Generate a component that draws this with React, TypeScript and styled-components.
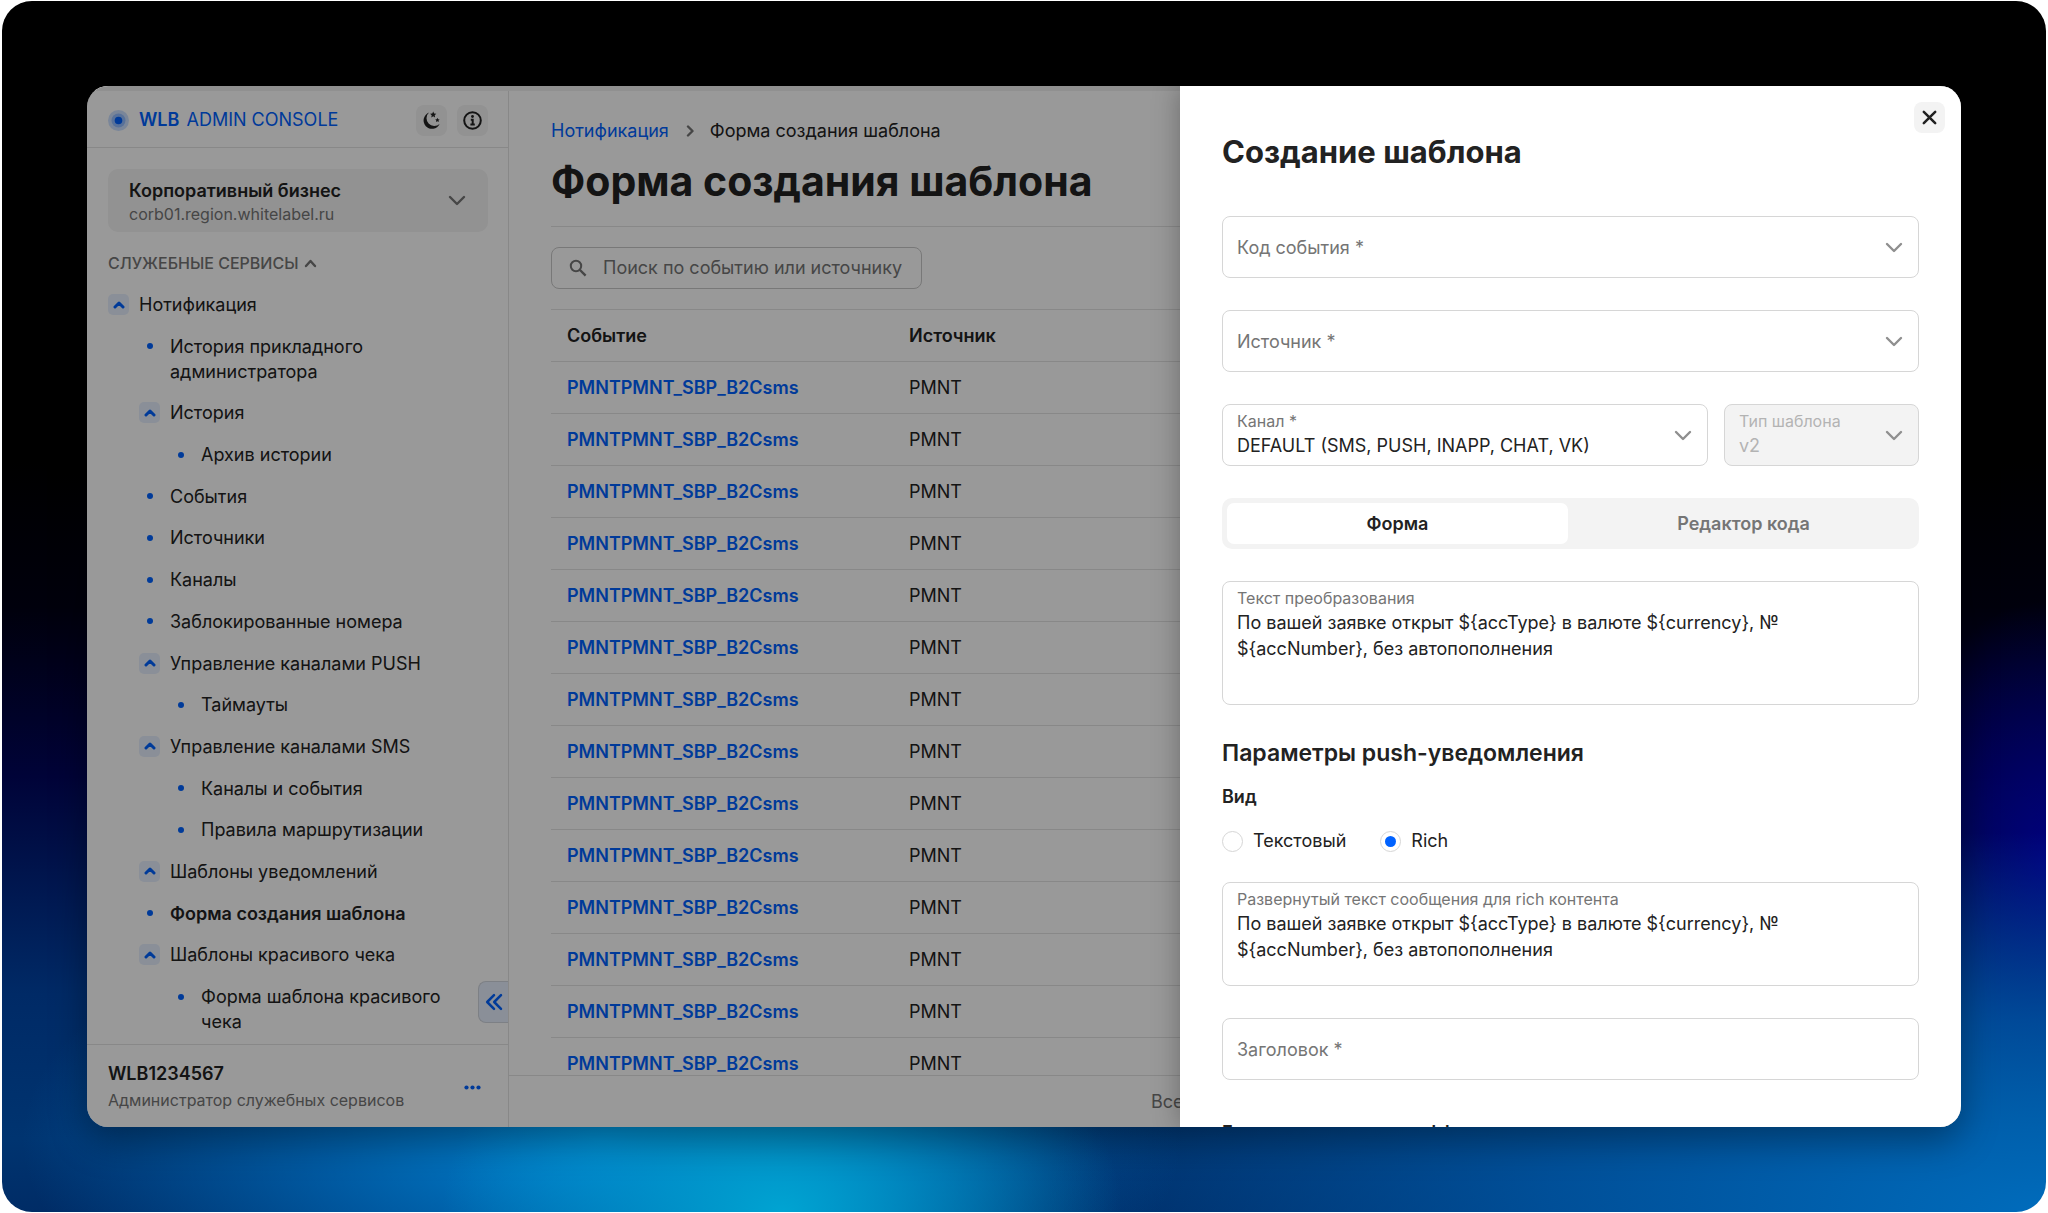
import React from "react";
import styled, { createGlobalStyle, css } from "styled-components";

const color = {
  text: "#222222",
  muted: "#757575",
  faint: "#b3b3b3",
  line: "#e3e3e3",
  border: "#d6d6d6",
  soft: "#f3f3f3",
  blue: "#0062ff",
  blueSoft: "#e6effd",
};

const GlobalStyle = createGlobalStyle`
  *, *::before, *::after { box-sizing: border-box; }
  body {
    margin: 0;
    background: #ffffff;
    color: ${color.text};
    font: 400 18px/26px Inter, "Liberation Sans", sans-serif;
  }
  button, input, select, textarea { font: inherit; color: inherit; margin: 0; }
  button { border: 0; padding: 0; background: none; cursor: pointer; }
  h1, h2, h3, p, ul { margin: 0; padding: 0; }
  a { color: ${color.blue}; text-decoration: none; }
`;

const Page = styled.div`
  height: 100vh;
  padding: 1px 2px;
`;

const Backdrop = styled.div`
  height: 100%;
  padding: 85px;
  border-radius: 30px;
  background:
    radial-gradient(ellipse 340px 230px at 780px 100%, #00a4d2 0%, rgba(0, 156, 206, 0.6) 45%, transparent 100%),
    radial-gradient(ellipse 580px 260px at 600px 94%, #0084d2 0%, rgba(0, 116, 196, 0.6) 50%, transparent 100%),
    radial-gradient(ellipse 1000px 380px at 100% 100%, #006cbc 0%, rgba(0, 90, 168, 0.75) 50%, transparent 100%),
    radial-gradient(ellipse 160px 260px at 100% 71%, #00007c 0%, rgba(0, 0, 110, 0.6) 50%, transparent 100%),
    linear-gradient(180deg, #000000 38%, #00000c 50%, #000338 64%, #002a66 82%, #003470 94%, #002c66 100%);
`;

const Window = styled.div`
  position: relative;
  display: flex;
  flex-direction: column;
  height: 100%;
  overflow: hidden;
  border-radius: 21px;
  background: #ffffff;
`;

const WindowShadow = styled.div`
  height: 100%;
  border-radius: 21px;
  box-shadow: 0 14px 36px rgba(0, 0, 0, 0.35);
`;

const TopStrip = styled.div`
  flex: none;
  height: 5px;
  background: #f0f0f0;
`;

const Columns = styled.div`
  display: flex;
  flex: 1;
  min-height: 0;
`;

/* Sidebar */

const Sidebar = styled.aside`
  position: relative;
  display: flex;
  flex: none;
  flex-direction: column;
  width: 422px;
  border-right: 1px solid ${color.line};
`;

const SideHead = styled.header`
  display: flex;
  align-items: center;
  gap: 10px;
  height: 57px;
  padding: 2px 20px 0 21px;
  border-bottom: 1px solid ${color.line};
`;

const Brand = styled.a`
  display: flex;
  flex: 1;
  align-items: center;
  gap: 10px;
`;

const BrandName = styled.span`
  b { margin-right: 2px; font-weight: 600; }
`;

const IconButton = styled.button`
  display: grid;
  flex: none;
  place-items: center;
  width: 31px;
  height: 31px;
  border-radius: 8px;
  background: ${color.soft};
`;

const SideBody = styled.div`
  display: flex;
  flex: 1;
  flex-direction: column;
  min-height: 0;
  padding: 21px 20px 10px 21px;
`;

const OrgButton = styled.button`
  display: flex;
  align-items: center;
  justify-content: space-between;
  height: 63px;
  padding: 0 22px 0 21px;
  border-radius: 10px;
  background: ${color.soft};
  text-align: left;
`;

const Stack = styled.span`
  display: flex;
  flex-direction: column;
`;

const Strong = styled.span`
  font-weight: 600;
  line-height: 26px;
`;

const Small = styled.span`
  color: ${color.muted};
  font-size: 16px;
  line-height: 20px;
`;

const GroupTitle = styled.button`
  display: flex;
  align-items: center;
  gap: 5px;
  margin: 20px 0 18px;
  color: ${color.muted};
  font-size: 16px;
  font-weight: 500;
  line-height: 22px;
`;

const Tree = styled.ul`
  display: flex;
  flex: 1;
  flex-direction: column;
  justify-content: space-between;
  list-style: none;
`;

const TreeRow = styled.li<{ $level: number }>`
  display: flex;
  gap: 10px;
  padding-left: ${(p) => p.$level * 31}px;
  line-height: 25px;
`;

const Marker = styled.span`
  display: grid;
  flex: none;
  place-items: center;
  width: 21px;
  height: 25px;
`;

const Toggle = styled.button`
  display: grid;
  place-items: center;
  width: 21px;
  height: 21px;
  border-radius: 5px;
  background: ${color.blueSoft};
`;

const Dot = styled.i`
  width: 6px;
  height: 6px;
  border-radius: 50%;
  background: ${color.blue};
`;

const TreeLink = styled.a<{ $active?: boolean }>`
  max-width: 260px;
  color: ${color.text};
  font-weight: ${(p) => (p.$active ? 600 : 400)};
`;

const CollapseButton = styled.button`
  position: absolute;
  right: 0;
  bottom: 104px;
  display: grid;
  place-items: center;
  width: 30px;
  height: 42px;
  border: 1px solid #d0d5de;
  border-right: 0;
  border-radius: 8px 0 0 8px;
  background: ${color.blueSoft};
`;

const UserBar = styled.footer`
  display: flex;
  align-items: center;
  justify-content: space-between;
  height: 83px;
  padding: 2px 27px 0 21px;
  border-top: 1px solid ${color.line};
`;

const MoreButton = styled.button`
  display: grid;
  place-items: center;
`;

const UserRole = styled(Small)`
  line-height: 26px;
`;

/* Main column */

const Main = styled.main`
  display: flex;
  flex: 1;
  flex-direction: column;
  min-width: 0;
`;

const Content = styled.div`
  display: flex;
  flex: 1;
  flex-direction: column;
  min-height: 0;
  padding: 27px 42px 0;
  overflow: hidden;
`;

const Crumbs = styled.nav`
  display: flex;
  align-items: center;
  gap: 15px;
`;

const PageTitle = styled.h1`
  padding: 12px 0 20px;
  border-bottom: 1px solid ${color.line};
  font-size: 41px;
  font-weight: 700;
  line-height: 50px;
`;

const SearchBox = styled.label`
  display: flex;
  flex: none;
  align-items: center;
  gap: 16px;
  width: 371px;
  height: 42px;
  margin: 20px 0;
  padding: 0 5px 0 17px;
  border: 1px solid #c8c8c8;
  border-radius: 8px;
`;

const SearchInput = styled.input`
  flex: 1;
  min-width: 0;
  padding: 0;
  border: 0;
  outline: 0;
  background: transparent;
  &::placeholder { color: ${color.muted}; opacity: 1; }
`;

const Table = styled.table`
  width: 100%;
  border-collapse: collapse;
  table-layout: fixed;
  border-top: 1px solid ${color.line};
`;

const Cell = css`
  height: 52px;
  padding: 1px 16px 0;
  border-bottom: 1px solid ${color.line};
  text-align: left;
`;

const Th = styled.th<{ $width?: string }>`
  ${Cell}
  width: ${(p) => p.$width ?? "auto"};
  font-weight: 600;
`;

const Td = styled.td`
  ${Cell}
`;

const EventLink = styled.a`
  font-weight: 600;
`;

const MainFooter = styled.footer`
  display: flex;
  flex: none;
  align-items: center;
  justify-content: center;
  height: 52px;
  border-top: 1px solid ${color.line};
  color: ${color.muted};
`;

/* Drawer */

const Overlay = styled.div`
  position: absolute;
  inset: 0;
  display: flex;
  justify-content: flex-end;
  background: rgba(0, 0, 0, 0.4);
`;

const Drawer = styled.section`
  position: relative;
  width: 781px;
  max-width: 100%;
  padding: 46px 42px 0;
  overflow: hidden;
  background: #ffffff;
  box-shadow: 0 0 26px rgba(0, 0, 0, 0.3);
`;

const DrawerTitle = styled.h2`
  margin-bottom: 44px;
  font-size: 31px;
  font-weight: 700;
  line-height: 40px;
`;

const CloseButton = styled(IconButton)`
  position: absolute;
  top: 16px;
  right: 16px;
`;

const Form = styled.form`
  display: flex;
  flex-direction: column;
  gap: 32px;
`;

const Row = styled.div`
  display: flex;
  gap: 16px;
`;

const FieldBox = styled.div<{ $height: number; $width?: number; $disabled?: boolean }>`
  display: grid;
  flex: ${(p) => (p.$width ? `0 0 ${p.$width}px` : "1 1 auto")};
  height: ${(p) => p.$height}px;
  border: 1px solid ${color.border};
  border-radius: 8px;
  background: ${(p) => (p.$disabled ? color.soft : "#ffffff")};
  color: ${(p) => (p.$disabled ? color.faint : color.text)};
  > * { grid-area: 1 / 1; }
`;

const FieldLabel = styled.label<{ $floating: boolean; $disabled?: boolean }>`
  z-index: 1;
  align-self: ${(p) => (p.$floating ? "start" : "center")};
  padding: ${(p) => (p.$floating ? "6px 14px 0" : "1px 14px 0")};
  color: ${(p) => (p.$disabled ? color.faint : color.muted)};
  font-size: ${(p) => (p.$floating ? 16 : 18)}px;
  line-height: ${(p) => (p.$floating ? 20 : 26)}px;
  pointer-events: none;
`;

const control = css`
  width: 100%;
  height: 100%;
  border: 0;
  border-radius: 8px;
  outline: 0;
  background: transparent;
  appearance: none;
`;

const Select = styled.select`
  ${control}
  padding: 22px 48px 0 14px;
  &:disabled { color: ${color.faint}; opacity: 1; }
`;

const Input = styled.input`
  ${control}
  padding: 0 14px;
`;

const TextArea = styled.textarea`
  ${control}
  padding: 28px 14px 0;
  resize: none;
  overflow: hidden;
`;

const SelectArrow = styled.span`
  place-self: center end;
  padding-right: 15px;
  line-height: 0;
  pointer-events: none;
`;

const Segments = styled.div`
  display: flex;
  gap: 5px;
  height: 51px;
  padding: 5px;
  border-radius: 10px;
  background: ${color.soft};
`;

const Segment = styled.button<{ $active?: boolean }>`
  flex: 1;
  border-radius: 7px;
  background: ${(p) => (p.$active ? "#ffffff" : "transparent")};
  color: ${(p) => (p.$active ? color.text : color.muted)};
  font-weight: 600;
`;

const SectionTitle = styled.h3`
  font-size: 23px;
  font-weight: 600;
  line-height: 32px;
`;

const SubTitle = styled.h3`
  padding-top: 8px;
  font-size: 18px;
  font-weight: 600;
  line-height: 26px;
`;

const RadioGroup = styled.fieldset`
  display: flex;
  gap: 34px;
  min-width: 0;
  margin: -17px 0 -4px;
  padding: 0;
  border: 0;
`;

const Legend = styled.legend`
  margin-bottom: 18px;
  padding: 0;
  font-weight: 600;
`;

const RadioLabel = styled.label`
  display: flex;
  align-items: center;
  gap: 10px;
`;

const Radio = styled.input`
  width: 21px;
  height: 21px;
  border: 1px solid ${color.border};
  border-radius: 50%;
  appearance: none;
  display: grid;
  place-items: center;
  &:checked::before {
    content: "";
    width: 11px;
    height: 11px;
    border-radius: 50%;
    background: ${color.blue};
  }
`;

/* Icons */

type ChevronProps = { w: number; h: number; stroke: string; up?: boolean; weight?: number };

const Chevron = ({ w, h, stroke, up, weight = 2.4 }: ChevronProps) => (
  <svg width={w + 4} height={h + 4} viewBox={`-2 -2 ${w + 4} ${h + 4}`} fill="none" aria-hidden="true">
    <path
      d={up ? `M0 ${h} L${w / 2} 0 L${w} ${h}` : `M0 0 L${w / 2} ${h} L${w} 0`}
      stroke={stroke}
      strokeWidth={weight}
      strokeLinecap="round"
      strokeLinejoin="round"
    />
  </svg>
);

const Logo = () => (
  <svg width="21" height="21" viewBox="0 0 21 21" aria-hidden="true">
    <circle cx="10.5" cy="10.5" r="10.5" fill={color.blue} opacity="0.2" />
    <circle cx="10.5" cy="10.5" r="7" fill={color.blue} opacity="0.28" />
    <circle cx="10.5" cy="10.5" r="3.8" fill={color.blue} />
  </svg>
);

const MoonIcon = () => (
  <svg width="21" height="21" viewBox="0 0 21 21" fill={color.text} aria-hidden="true">
    <path d="M8 2.6A8.4 8.4 0 1 0 18.6 14 6.9 6.9 0 0 1 8 2.6Z" />
    <path d="M12.2 1.4l.9 2 2.2.3-1.6 1.5.4 2.2-1.9-1.1-1.9 1.1.4-2.2-1.6-1.5 2.2-.3Z" />
    <path d="M16.4 7.8l.7 1.4 1.5.2-1.1 1.1.3 1.5-1.4-.7-1.4.7.3-1.5-1.1-1.1 1.5-.2Z" />
  </svg>
);

const InfoIcon = () => (
  <svg width="21" height="21" viewBox="0 0 21 21" fill="none" aria-hidden="true">
    <circle cx="10.5" cy="10.5" r="8.3" stroke={color.text} strokeWidth="2" />
    <circle cx="10.5" cy="6.5" r="1.4" fill={color.text} />
    <path d="M8.8 9.8h1.9v4.6M8.4 14.6h4.4" stroke={color.text} strokeWidth="2" />
  </svg>
);

const SearchIcon = () => (
  <svg width="18" height="18" viewBox="0 0 18 18" fill="none" aria-hidden="true">
    <circle cx="7" cy="7" r="5.2" stroke={color.muted} strokeWidth="2" />
    <path d="M11 11l5.6 5.6" stroke={color.muted} strokeWidth="2.4" />
  </svg>
);

const CollapseIcon = () => (
  <svg width="18" height="18" viewBox="0 0 18 18" fill="none" stroke={color.blue} strokeWidth="2.5" strokeLinecap="round" strokeLinejoin="round" aria-hidden="true">
    <path d="M9 2.2L2.2 9 9 15.8M16 2.2L9.2 9l6.8 6.8" />
  </svg>
);

const MoreIcon = () => (
  <svg width="17" height="5" viewBox="0 0 17 5" fill={color.blue} aria-hidden="true">
    <circle cx="2.5" cy="2.5" r="2.1" />
    <circle cx="8.5" cy="2.5" r="2.1" />
    <circle cx="14.5" cy="2.5" r="2.1" />
  </svg>
);

const CloseIcon = () => (
  <svg width="15" height="15" viewBox="0 0 15 15" fill="none" aria-hidden="true">
    <path d="M1.8 1.8l11.4 11.4M13.2 1.8L1.8 13.2" stroke={color.text} strokeWidth="2.5" strokeLinecap="round" />
  </svg>
);

/* Data */

type Node = { title: string; level: number; group?: boolean; active?: boolean };

const tree: Node[] = [
  { title: "Нотификация", level: 0, group: true },
  { title: "История прикладного администратора", level: 1 },
  { title: "История", level: 1, group: true },
  { title: "Архив истории", level: 2 },
  { title: "События", level: 1 },
  { title: "Источники", level: 1 },
  { title: "Каналы", level: 1 },
  { title: "Заблокированные номера", level: 1 },
  { title: "Управление каналами PUSH", level: 1, group: true },
  { title: "Таймауты", level: 2 },
  { title: "Управление каналами SMS", level: 1, group: true },
  { title: "Каналы и события", level: 2 },
  { title: "Правила маршрутизации", level: 2 },
  { title: "Шаблоны уведомлений", level: 1, group: true },
  { title: "Форма создания шаблона", level: 1, active: true },
  { title: "Шаблоны красивого чека", level: 1, group: true },
  { title: "Форма шаблона красивого чека", level: 2 },
];

const events = Array.from({ length: 14 }, (_, id) => ({ id, name: "PMNTPMNT_SBP_B2Csms", source: "PMNT" }));

const messageText = "По вашей заявке открыт ${accType} в валюте ${currency}, №\n${accNumber}, без автопополнения";

/* Parts */

type SelectFieldProps = { id: string; label: string; value?: string; width?: number; disabled?: boolean };

const SelectField = ({ id, label, value, width, disabled }: SelectFieldProps) => (
  <FieldBox $height={62} $width={width} $disabled={disabled}>
    <FieldLabel htmlFor={id} $floating={Boolean(value)} $disabled={disabled}>
      {label}
    </FieldLabel>
    <Select id={id} disabled={disabled} defaultValue={value ?? ""}>
      <option value={value ?? ""}>{value ?? ""}</option>
    </Select>
    <SelectArrow>
      <Chevron w={14} h={7} stroke="#8f8f8f" />
    </SelectArrow>
  </FieldBox>
);

const TextAreaField = ({ id, label, height }: { id: string; label: string; height: number }) => (
  <FieldBox $height={height}>
    <FieldLabel htmlFor={id} $floating>
      {label}
    </FieldLabel>
    <TextArea id={id} defaultValue={messageText} spellCheck={false} />
  </FieldBox>
);

const SideNav = () => (
  <Sidebar>
    <SideHead>
      <Brand href="#">
        <Logo />
        <BrandName>
          <b>WLB</b> ADMIN CONSOLE
        </BrandName>
      </Brand>
      <IconButton type="button" aria-label="Тёмная тема">
        <MoonIcon />
      </IconButton>
      <IconButton type="button" aria-label="Информация">
        <InfoIcon />
      </IconButton>
    </SideHead>
    <SideBody>
      <OrgButton type="button">
        <Stack>
          <Strong>Корпоративный бизнес</Strong>
          <Small>corb01.region.whitelabel.ru</Small>
        </Stack>
        <Chevron w={14} h={7} stroke={color.muted} />
      </OrgButton>
      <GroupTitle type="button">
        СЛУЖЕБНЫЕ СЕРВИСЫ
        <Chevron w={9} h={5} stroke={color.muted} up />
      </GroupTitle>
      <Tree>
        {tree.map((node) => (
          <TreeRow key={node.title} $level={node.level}>
            <Marker>
              {node.group ? (
                <Toggle type="button" aria-label={`Свернуть: ${node.title}`}>
                  <Chevron w={8} h={4} stroke={color.blue} weight={3} up />
                </Toggle>
              ) : (
                <Dot />
              )}
            </Marker>
            <TreeLink href="#" $active={node.active}>
              {node.title}
            </TreeLink>
          </TreeRow>
        ))}
      </Tree>
    </SideBody>
    <UserBar>
      <Stack>
        <Strong>WLB1234567</Strong>
        <UserRole>Администратор служебных сервисов</UserRole>
      </Stack>
      <MoreButton type="button" aria-label="Ещё">
        <MoreIcon />
      </MoreButton>
    </UserBar>
    <CollapseButton type="button" aria-label="Свернуть меню">
      <CollapseIcon />
    </CollapseButton>
  </Sidebar>
);

const TemplatesPage = () => (
  <Main>
    <Content>
      <Crumbs>
        <a href="#">Нотификация</a>
        <svg width="11" height="12" viewBox="0 0 11 12" fill="none" aria-hidden="true">
          <path d="M4 1.5L8.5 6 4 10.5" stroke={color.muted} strokeWidth="2.4" strokeLinecap="round" strokeLinejoin="round" />
        </svg>
        <span>Форма создания шаблона</span>
      </Crumbs>
      <PageTitle>Форма создания шаблона</PageTitle>
      <SearchBox>
        <SearchIcon />
        <SearchInput type="text" aria-label="Поиск" placeholder="Поиск по событию или источнику" />
      </SearchBox>
      <Table>
        <thead>
          <tr>
            <Th $width="342px">Событие</Th>
            <Th>Источник</Th>
          </tr>
        </thead>
        <tbody>
          {events.map((event) => (
            <tr key={event.id}>
              <Td>
                <EventLink href="#">{event.name}</EventLink>
              </Td>
              <Td>{event.source}</Td>
            </tr>
          ))}
        </tbody>
      </Table>
    </Content>
    <MainFooter>Всего записей: 100</MainFooter>
  </Main>
);

const CreateDrawer = () => (
  <Overlay>
    <Drawer aria-label="Создание шаблона">
      <CloseButton type="button" aria-label="Закрыть">
        <CloseIcon />
      </CloseButton>
      <DrawerTitle>Создание шаблона</DrawerTitle>
      <Form>
        <SelectField id="event-code" label="Код события *" />
        <SelectField id="source" label="Источник *" />
        <Row>
          <SelectField id="channel" label="Канал *" value="DEFAULT (SMS, PUSH, INAPP, CHAT, VK)" />
          <SelectField id="template-type" label="Тип шаблона" value="v2" width={195} disabled />
        </Row>
        <Segments>
          <Segment type="button" $active>
            Форма
          </Segment>
          <Segment type="button">Редактор кода</Segment>
        </Segments>
        <TextAreaField id="transform-text" label="Текст преобразования" height={124} />
        <SectionTitle>Параметры push-уведомления</SectionTitle>
        <RadioGroup>
          <Legend>Вид</Legend>
          <RadioLabel>
            <Radio type="radio" name="kind" value="text" />
            Текстовый
          </RadioLabel>
          <RadioLabel>
            <Radio type="radio" name="kind" value="rich" defaultChecked />
            Rich
          </RadioLabel>
        </RadioGroup>
        <TextAreaField id="rich-text" label="Развернутый текст сообщения для rich контента" height={104} />
        <FieldBox $height={62}>
          <FieldLabel htmlFor="title" $floating={false}>
            Заголовок *
          </FieldLabel>
          <Input id="title" type="text" />
        </FieldBox>
        <SubTitle>Главные кнопки спецэффектов</SubTitle>
      </Form>
    </Drawer>
  </Overlay>
);

export default function App() {
  return (
    <>
      <GlobalStyle />
      <Page>
        <Backdrop>
          <WindowShadow>
            <Window>
              <TopStrip />
              <Columns>
                <SideNav />
                <TemplatesPage />
              </Columns>
              <CreateDrawer />
            </Window>
          </WindowShadow>
        </Backdrop>
      </Page>
    </>
  );
}
